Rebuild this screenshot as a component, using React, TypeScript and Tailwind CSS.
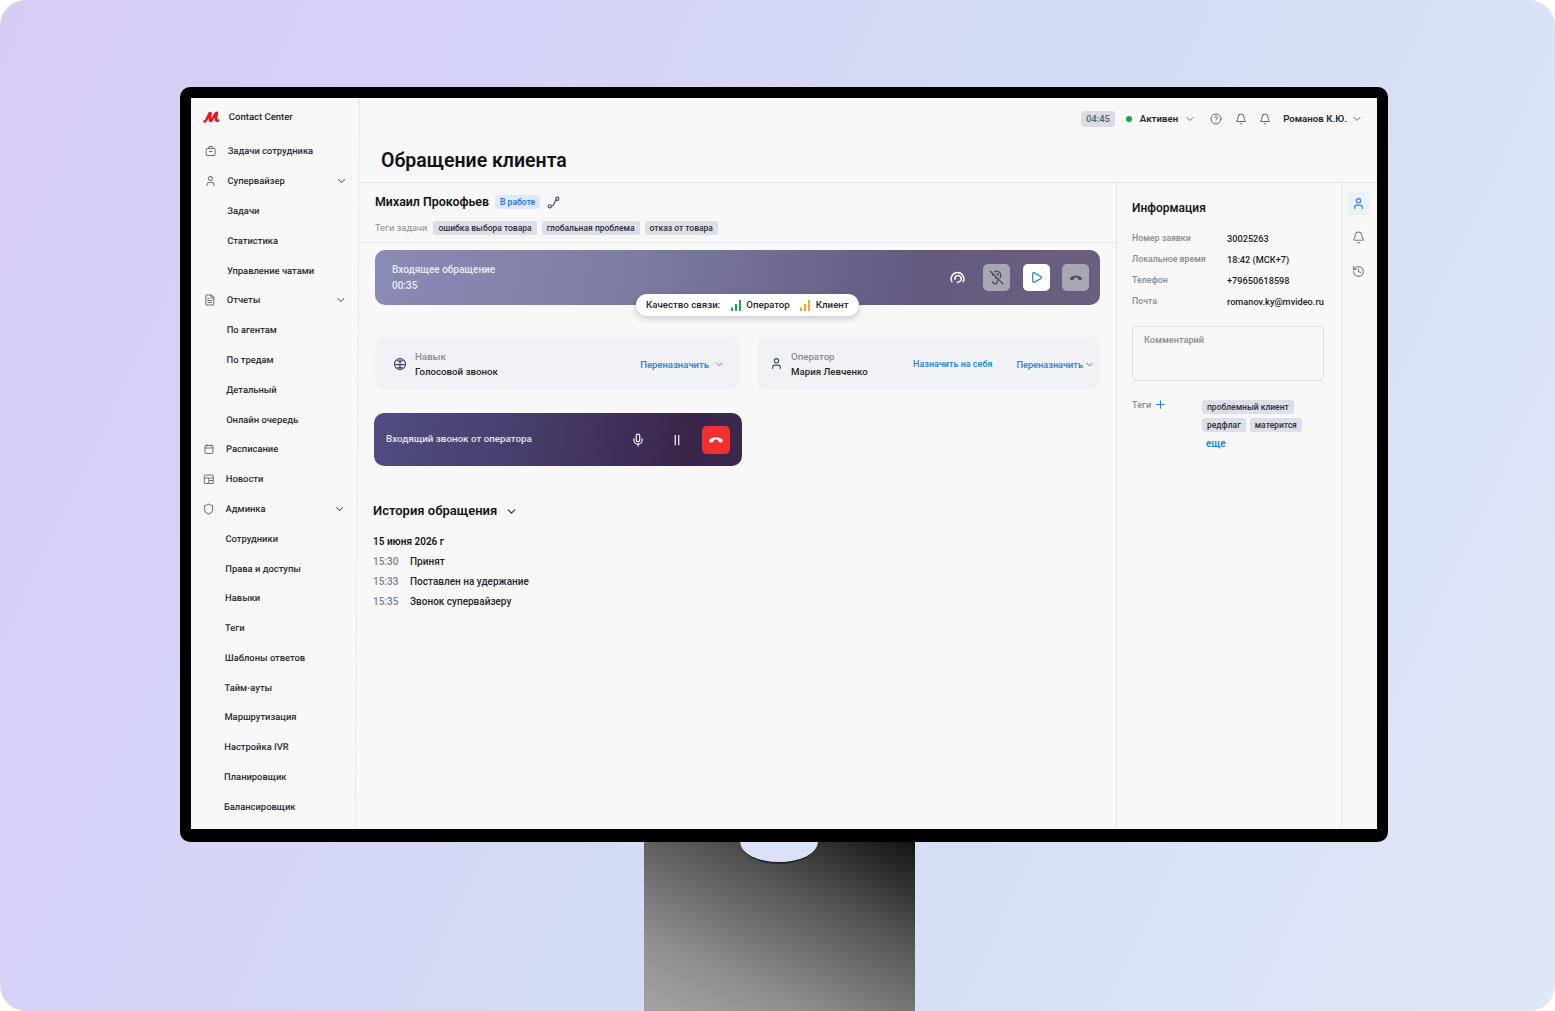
import { Bell, ChevronDown, CircleHelp, EarOff, FileText, History as HistoryIcon, Mic, Play, Plus, Shield, User } from "lucide-react";
import type { ReactNode } from "react";

type NavItem = { label: string; icon?: ReactNode; arrow?: boolean };

function Outline({ size = 12, children, className = "" }: { size?: number; children: ReactNode; className?: string }) {
  return (
    <svg width={size} height={size} viewBox="0 0 24 24" fill="none" stroke="currentColor" strokeWidth="2" strokeLinecap="round" strokeLinejoin="round" className={className}>
      {children}
    </svg>
  );
}

const TaskIcon = (
  <Outline>
    <rect x="3" y="7" width="18" height="14" rx="3" />
    <path d="M8 7V5a2 2 0 0 1 2-2h4a2 2 0 0 1 2 2v2M9 13h6" />
  </Outline>
);

const CalendarIcon = (
  <Outline>
    <rect x="4" y="5" width="16" height="16" rx="3" />
    <path d="M4 10h16M8 3v3M16 3v3" />
  </Outline>
);

const NewsIcon = (
  <Outline>
    <rect x="3" y="4" width="18" height="17" rx="2" />
    <path d="M3 10h18M12 10v11M12 15h9" />
  </Outline>
);

const nav: NavItem[] = [
  { label: "Задачи сотрудника", icon: TaskIcon },
  { label: "Супервайзер", icon: <User size={12} />, arrow: true },
  { label: "Задачи" },
  { label: "Статистика" },
  { label: "Управление чатами" },
  { label: "Отчеты", icon: <FileText size={12} />, arrow: true },
  { label: "По агентам" },
  { label: "По тредам" },
  { label: "Детальный" },
  { label: "Онлайн очередь" },
  { label: "Расписание", icon: CalendarIcon },
  { label: "Новости", icon: NewsIcon },
  { label: "Админка", icon: <Shield size={12} />, arrow: true },
  { label: "Сотрудники" },
  { label: "Права и доступы" },
  { label: "Навыки" },
  { label: "Теги" },
  { label: "Шаблоны ответов" },
  { label: "Тайм-ауты" },
  { label: "Маршрутизация" },
  { label: "Настройка IVR" },
  { label: "Планировщик" },
  { label: "Балансировщик" },
];

function HangUp({ size = 14, className = "" }: { size?: number; className?: string }) {
  return (
    <svg width={size} height={size} viewBox="0 0 24 24" fill="currentColor" className={className}>
      <path d="M12 8c-3.600 0-7 1.100-9.400 3.100-.8.700-1 1.800-.5 2.700l.7 1.200c.4.700 1.200 1 2 .8l2.600-.8c.7-.2 1.100-.8 1.100-1.500v-1.600c1.200-.5 2.400-.7 3.500-.7s2.300.2 3.500.7v1.600c0 .7.400 1.300 1.100 1.500l2.600.8c.8.200 1.600-.1 2-.8l.7-1.200c.5-.9.300-2-.5-2.700C19 9.100 15.600 8 12 8z" />
    </svg>
  );
}

function Signal({ color }: { color: string }) {
  return (
    <svg width="10" height="11" viewBox="0 0 10 11" className={color} fill="currentColor">
      <rect x="0" y="7.500" width="2" height="3.500" />
      <rect x="4" y="4" width="2" height="7" />
      <rect x="8" y="0" width="2" height="11" />
    </svg>
  );
}

function Sidebar() {
  return (
    <aside className="flex w-[169px] shrink-0 origin-top -skew-x-[0.33deg] flex-col border-r border-[#e6e7ea] pl-[12px] pr-[11px]">
      <div className="flex h-[38.500px] items-center gap-[8px]">
        <svg width="18" height="12" viewBox="0 0 36 24" className="text-[#e8141c]" fill="none" stroke="currentColor" strokeWidth="5" strokeLinecap="round" strokeLinejoin="round">
          <path d="M3 21c4 0 5-6 8-12 1-3 3-5 4-5 1 0-1 8-1 12 0 3 1 5 3 3 3-3 5-10 8-13 1-2 3-3 3-2 0 3-2 8-2 12 0 3 1 4 5 3" />
        </svg>
        <span className="text-[9.500px] font-medium text-[#24262b]">Contact Center</span>
      </div>
      <nav className="flex flex-col">
        {nav.map((item) => (
          <div key={item.label} className="flex h-[29.800px] items-center text-[9.400px] font-medium text-[#2b2d33]">
            <span className="flex w-[25px] shrink-0 items-center pl-[2px] text-[#667089]">{item.icon}</span>
            <span>{item.label}</span>
            {item.arrow && <ChevronDown size={12} className="ml-auto text-[#4f5a78]" />}
          </div>
        ))}
      </nav>
    </aside>
  );
}

function Header() {
  return (
    <header className="flex h-[85px] shrink-0 flex-col border-b border-[#e6e7ea] pr-[14px]">
      <div className="flex h-[41px] items-center justify-end pt-[1px] text-[9.700px] font-medium text-[#24262b]">
        <span className="rounded-[3px] bg-[#d9dce3] px-[5px] py-[1px] text-[9.300px] text-[#596074]">04:45</span>
        <span className="ml-[11px] size-[6px] rounded-full bg-[#10a843]" />
        <span className="ml-[8px] font-semibold">Активен</span>
        <ChevronDown size={12} className="ml-[6px] text-[#5b6378]" />
        <CircleHelp size={12} className="ml-[14px] text-[#5b6378]" />
        <Bell size={12} className="ml-[13px] text-[#5b6378]" />
        <Bell size={12} className="ml-[12px] text-[#5b6378]" />
        <span className="ml-[12px] font-semibold">Романов К.Ю.</span>
        <ChevronDown size={12} className="ml-[4px] text-[#5b6378]" />
      </div>
      <h1 className="pl-[21px] pt-[2px] text-[19.500px] font-semibold leading-[40px] text-[#111216]">Обращение клиента</h1>
    </header>
  );
}

function Tag({ children }: { children: ReactNode }) {
  return <span className="rounded-[3px] bg-[#dcdfe6] px-[5px] py-[2px] text-[8.500px] font-medium leading-[10px] text-[#2d303a]">{children}</span>;
}

function CallPanel() {
  return (
    <div className="relative ml-[15px] mt-[7px] flex h-[55px] w-[725px] items-center justify-between rounded-[10px] bg-[linear-gradient(100deg,#8a8bb6_0%,#7d7ca3_35%,#635a7e_75%,#6b5f7f_100%)] pl-[17px] pr-[11px] text-[10px] font-medium leading-[16px] text-[#eceaf5]">
      <div className="pt-[1px]">
        <div>Входящее обращение</div>
        <div>00:35</div>
      </div>
      <div className="flex items-center">
        <Outline size={17} className="mr-[17px] text-white">
          <path d="M4 18a9 9 0 1 1 16 0" />
          <path d="M8.500 15a4.500 4.500 0 1 1 7.500 2c-1 1-2.500 1.500-4 2" />
        </Outline>
        <span className="flex size-[27px] items-center justify-center rounded-[5px] bg-[#a9a6b4] text-[#4c4a58]"><EarOff size={15} /></span>
        <span className="ml-[13px] flex size-[27px] items-center justify-center rounded-[5px] bg-white text-[#1673f0]"><Play size={13} /></span>
        <span className="ml-[12px] flex size-[27px] items-center justify-center rounded-[5px] bg-[#a9a6b4] text-[#4c4a58]"><HangUp /></span>
      </div>
      <div className="absolute left-[261px] top-[44px] flex h-[22px] items-center whitespace-nowrap rounded-full bg-white px-[10px] text-[9.700px] text-[#24262b] shadow-[0_2px_6px_rgba(40,40,70,.25)]">
        <span>Качество связи:</span>
        <span className="ml-[11px]"><Signal color="text-[#1cab4a]" /></span>
        <span className="ml-[5px]">Оператор</span>
        <span className="ml-[10px]"><Signal color="text-[#f5a623]" /></span>
        <span className="ml-[6px]">Клиент</span>
      </div>
    </div>
  );
}

function Assign() {
  return (
    <div className="ml-[15px] mt-[32px] flex gap-[17px]">
      <div className="flex h-[53px] w-[365px] shrink-0 items-center rounded-[10px] bg-[#f1f2f5] pl-[18px] pr-[15px] text-[9.700px] font-medium leading-[15px]">
        <Outline size={14} className="text-[#3d4a63]">
          <circle cx="12" cy="12" r="9.500" />
          <path d="M12 3v18M12 8 7 6M12 8l5-2M12 13H4M12 13h8M12 17l-4 2M12 17l4 2" />
        </Outline>
        <div className="ml-[8px]">
          <div className="text-[#868b9c]">Навык</div>
          <div className="text-[#24262b]">Голосовой звонок</div>
        </div>
        <span className="ml-auto pt-[1px] text-[9.500px] text-[#1a82e8]">Переназначить</span>
        <ChevronDown size={11} className="ml-[5px] mt-[1px] text-[#1a82e8]" />
      </div>
      <div className="flex h-[53px] w-[343px] shrink-0 items-center rounded-[10px] bg-[#f1f2f5] pl-[13px] pr-[5px] text-[9.700px] font-medium leading-[15px]">
        <User size={13} className="text-[#3d4a63]" />
        <div className="ml-[8px] whitespace-nowrap">
          <div className="text-[#868b9c]">Оператор</div>
          <div className="text-[#24262b]">Мария Левченко</div>
        </div>
        <span className="ml-auto whitespace-nowrap pt-[1px] text-[9px] text-[#1a82e8]">Назначить на себя</span>
        <span className="ml-[24px] pt-[1px] text-[9.200px] text-[#1a82e8]">Переназначить</span>
        <ChevronDown size={11} className="ml-[1px] mt-[1px] text-[#1a82e8]" />
      </div>
    </div>
  );
}

function OperatorCall() {
  return (
    <div className="ml-[14px] mt-[23px] flex h-[53px] w-[368px] items-center rounded-[10px] bg-[linear-gradient(100deg,#4f4d80_0%,#473e6c_40%,#3a2549_85%,#3a2a4e_100%)] pl-[12px] pr-[12px] text-[9.800px] font-medium text-[#e4e3f0]">
      <span>Входящий звонок от оператора</span>
      <Mic size={14} className="ml-auto text-white" />
      <Outline size={14} className="ml-[25px] text-white">
        <path d="M9 4v16M15 4v16" />
      </Outline>
      <span className="ml-[18px] flex size-[28px] items-center justify-center rounded-[5px] bg-[#f23030] text-white"><HangUp size={16} /></span>
    </div>
  );
}

function History() {
  const rows = [
    ["15:30", "Принят"],
    ["15:33", "Поставлен на удержание"],
    ["15:35", "Звонок супервайзеру"],
  ];
  return (
    <section className="ml-[13px] mt-[33px]">
      <div className="flex items-center text-[13px] font-semibold leading-[24px] text-[#14151a]">
        История обращения
        <ChevronDown size={13} className="ml-[8px] text-[#2b2d33]" />
      </div>
      <div className="mt-[11px] text-[10px] font-semibold leading-[16px] text-[#14151a]">15 июня 2026 г</div>
      <div className="mt-[2px] text-[10px] font-medium">
        {rows.map(([time, text]) => (
          <div key={time} className="flex h-[19.700px] items-center">
            <span className="w-[37px] text-[#7a8094]">{time}</span>
            <span className="text-[#24262b]">{text}</span>
          </div>
        ))}
      </div>
    </section>
  );
}

function Info() {
  const rows = [
    ["Номер заявки", "30025263"],
    ["Локальное время", "18:42 (МСК+7)"],
    ["Телефон", "+79650618598"],
    ["Почта", "romanov.ky@mvideo.ru"],
  ];
  return (
    <section className="w-[226px] shrink-0 border-x border-[#e6e7ea] pl-[15px] pr-[17px] text-[9.200px] font-medium">
      <h2 className="pt-[16px] text-[12px] font-semibold leading-[18px] text-[#1b1c22]">Информация</h2>
      <div className="mt-[11px]">
        {rows.map(([k, v]) => (
          <div key={k} className="flex h-[21px] items-center">
            <span className="w-[95px] shrink-0 text-[8.800px] text-[#868b9c]">{k}</span>
            <span className="whitespace-nowrap text-[#1b1c22]">{v}</span>
          </div>
        ))}
      </div>
      <div className="mt-[14px] h-[55px] rounded-[4px] border border-[#dcdfe6] px-[11px] pt-[6px] leading-[14px] text-[#868b9c]">Комментарий</div>
      <div className="mt-[17px] flex">
        <div className="flex w-[70px] shrink-0 items-center self-start text-[#868b9c]">
          Теги
          <Plus size={13} className="ml-[3px] text-[#1a82e8]" />
        </div>
        <div className="flex flex-col items-start gap-[4px] pt-[2px]">
          <Tag>проблемный клиент</Tag>
          <div className="flex gap-[4px]">
            <Tag>редфлаг</Tag>
            <Tag>матерится</Tag>
          </div>
          <span className="pl-[4px] pt-[1px] text-[10px] font-semibold leading-[14px] text-[#1a82e8]">еще</span>
        </div>
      </div>
    </section>
  );
}

function Rail() {
  return (
    <div className="flex w-[35px] shrink-0 flex-col items-center pr-[3px] pt-[9px] text-[#7b8296]">
      <span className="flex size-[23px] items-center justify-center rounded-[5px] bg-[#edf1fa] text-[#1a82e8]"><User size={13} /></span>
      <Bell size={13} className="mt-[16px]" />
      <HistoryIcon size={13} className="mt-[21px]" />
    </div>
  );
}

export default function App() {
  return (
    <div className="h-[1011px] w-[1555px] overflow-hidden bg-white font-['Roboto','Noto_Sans',sans-serif]">
      <div className="flex h-full flex-col items-center rounded-[26px] bg-[linear-gradient(115deg,#d8ccf6_0%,#d5d3f5_25%,#d3dcf6_55%,#e0e7f6_100%)] pt-[87px]">
        <div className="ml-[13px] h-[755px] w-[1208px] shrink-0 rounded-[10px] bg-black p-[11px]">
          <div className="flex h-[731px] bg-[#f8f8f9]">
            <Sidebar />
            <main className="flex min-w-0 flex-1 flex-col">
              <Header />
              <div className="flex flex-1">
                <div className="min-w-0 flex-1">
                  <div className="h-[60px] border-b border-[#e6e7ea] pl-[15px]">
                    <div className="flex items-center pt-[10px]">
                      <span className="text-[12.400px] font-semibold leading-[18px] text-[#111216]">Михаил Прокофьев</span>
                      <span className="ml-[6px] rounded-[3px] bg-[#dbeafb] px-[5px] text-[8.600px] font-medium leading-[14px] text-[#1673f0]">В работе</span>
                      <Outline size={13} className="ml-[7px] text-[#3d4a63]">
                        <circle cx="5" cy="19" r="3" />
                        <circle cx="19" cy="5" r="3" />
                        <path d="M8 19c6 0 4-5 7-9 1-1.500 2-2.500 3-3" />
                      </Outline>
                    </div>
                    <div className="mt-[10px] flex items-center gap-[5px] text-[9.300px] text-[#868b9c]">
                      <span className="mr-[1px]">Теги задачи</span>
                      <Tag>ошибка выбора товара</Tag>
                      <Tag>глобальная проблема</Tag>
                      <Tag>отказ от товара</Tag>
                    </div>
                  </div>
                  <CallPanel />
                  <Assign />
                  <OperatorCall />
                  <History />
                </div>
                <Info />
                <Rail />
              </div>
            </main>
          </div>
        </div>
        <div className="relative ml-[3px] h-[169px] w-[271px] shrink-0 bg-[linear-gradient(205deg,#131313_0%,#555555_35%,#8f8f8f_75%,#a3a3a3_100%)]">
          <div className="absolute left-[96px] top-0 h-[22px] w-[78px] border-b-2 border-[#222222] bg-[#dbe1f6] [border-radius:0_0_50%_50%/0_0_100%_100%]" />
        </div>
      </div>
    </div>
  );
}
